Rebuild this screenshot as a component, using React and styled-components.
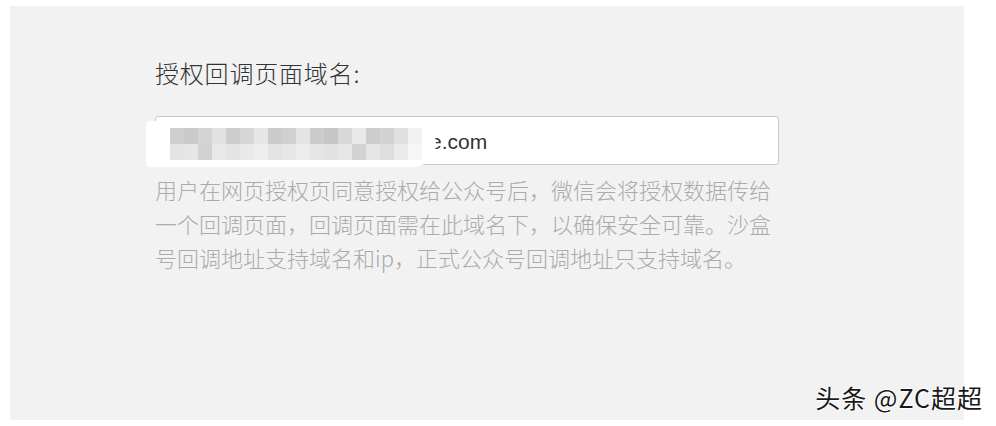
import React from 'react'
import styled, { createGlobalStyle } from 'styled-components'

const GlobalStyle = createGlobalStyle`
  html, body {
    margin: 0;
    padding: 0;
    background: #ffffff;
  }
  body {
    font-family: "Noto Sans CJK SC", "Noto Sans", sans-serif;
  }
`

const Page = styled.div`
  position: relative;
  width: 996px;
  height: 426px;
  padding: 6px 32px 6px 10px;
  box-sizing: border-box;
`

const Panel = styled.div`
  height: 100%;
  background: #f2f2f2;
  padding: 51px 0 0 145px;
  box-sizing: border-box;
`

const Label = styled.div`
  font-size: 24px;
  line-height: 32px;
  letter-spacing: 0.8px;
  color: #333333;
  font-weight: 300;
`

const Field = styled.div`
  position: relative;
  margin-top: 27px;
  width: 624px;
  height: 49px;
  box-sizing: border-box;
  background: #ffffff;
  border: 1px solid #c9c9c9;
  border-radius: 3px;
  display: flex;
  align-items: center;
  padding: 2px 0 0 274px;
  font-family: "Liberation Sans", "Noto Sans", sans-serif;
  font-size: 21px;
  color: #333333;
`

const Redact = styled.div`
  position: absolute;
  left: -10px;
  top: 4px;
  width: 290px;
  height: 46px;
  background: #ffffff;
  border-radius: 8px 40px 40px 8px;
  display: flex;
  align-items: center;
  padding-left: 24px;
  box-sizing: border-box;
  filter: blur(0.6px);
`

const Mosaic = styled.div`
  display: grid;
  grid-template-columns: repeat(18, 14px);
  grid-auto-rows: 16px;
`

const Cell = styled.div`
  background: ${(p) => p.$c};
`

const Help = styled.div`
  margin-top: 7px;
  width: 628px;
  font-size: 22px;
  line-height: 34px;
  color: #ababab;
  font-weight: 300;
`

const Watermark = styled.div`
  position: absolute;
  right: 13px;
  bottom: 14px;
  font-size: 25px;
  line-height: 30px;
  letter-spacing: 1px;
  color: #1a1a1a;
  text-shadow: 1px 1px 0 #ffffff, -1px 0 0 #ffffff, 0 -1px 0 #ffffff;
`

const cells = [
  '#cfcfcf', '#cacaca', '#d4d4d4', '#e2e2e2', '#cdcdcd', '#d6d6d6', '#e6e6e6',
  '#cbcbcb', '#d0d0d0', '#e4e4e4', '#cccccc', '#c6c6c6', '#d8d8d8', '#e9e9e9',
  '#cdcdcd', '#d3d3d3', '#e0e0e0', '#f2f2f2',
  '#e3e3e3', '#e6e6e6', '#d2d2d2', '#e8e8e8', '#e4e4e4', '#e9e9e9', '#eeeeee',
  '#e3e3e3', '#e7e7e7', '#ececec', '#e5e5e5', '#e2e2e2', '#e7e7e7', '#d3d3d3',
  '#e6e6e6', '#dedede', '#ebebeb', '#f6f6f6',
]

export default function App() {
  return (
    <>
      <GlobalStyle />
      <Page>
        <Panel>
          <Label>授权回调页面域名:</Label>
          <Field>
            <Redact>
              <Mosaic>
                {cells.map((c, i) => (
                  <Cell key={i} $c={c} />
                ))}
              </Mosaic>
            </Redact>
            e.com
          </Field>
          <Help>
            用户在网页授权页同意授权给公众号后，微信会将授权数据传给一个回调页面，回调页面需在此域名下，以确保安全可靠。沙盒号回调地址支持域名和ip，正式公众号回调地址只支持域名。
          </Help>
        </Panel>
        <Watermark>头条 @ZC超超</Watermark>
      </Page>
    </>
  )
}
